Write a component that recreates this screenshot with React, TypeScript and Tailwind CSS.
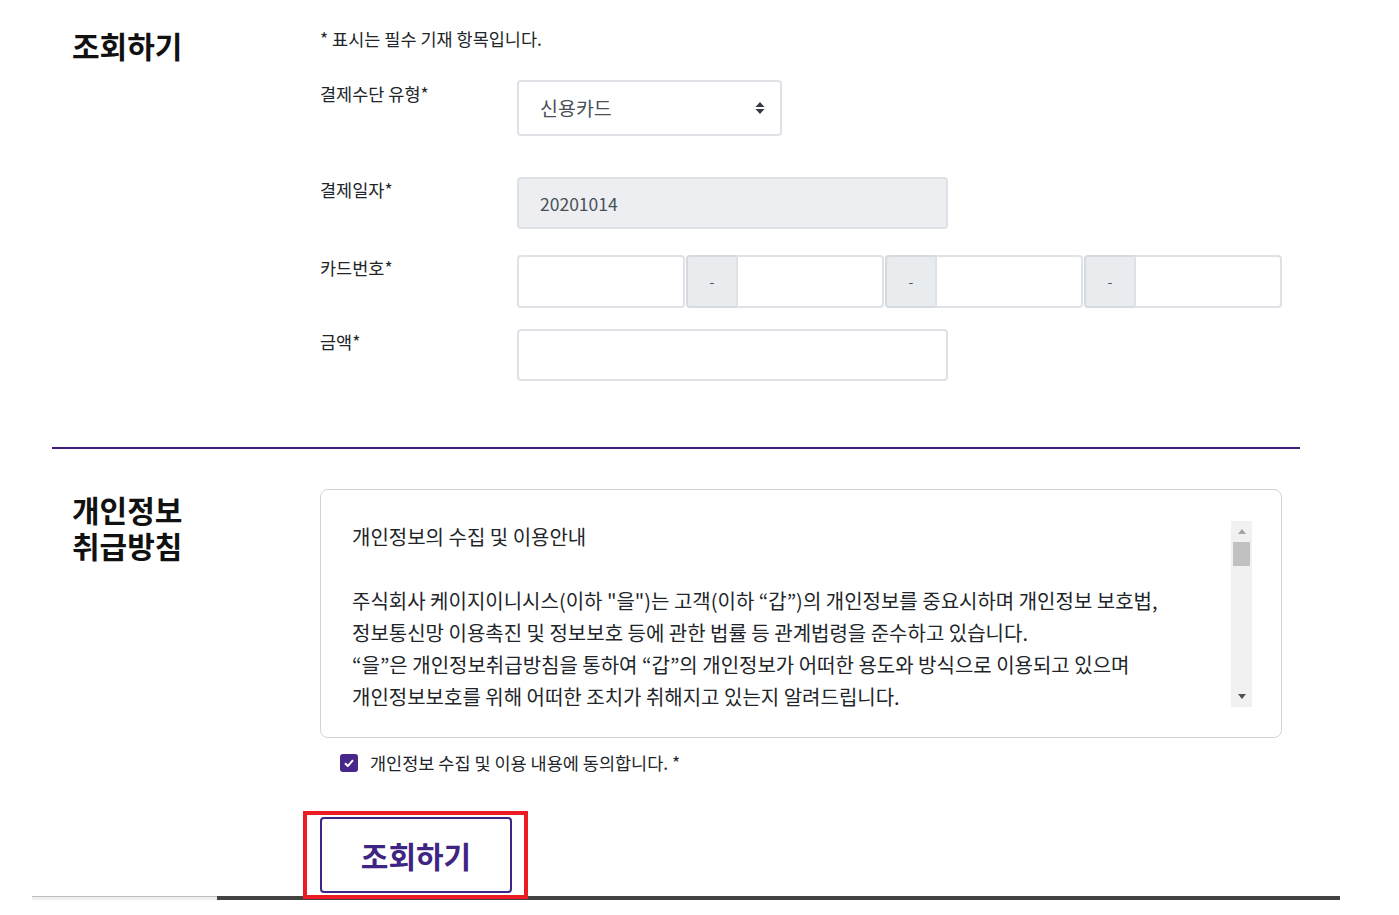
import { useState } from "react";

const policyLines = [
  "주식회사 케이지이니시스(이하 \"을\")는 고객(이하 “갑”)의 개인정보를 중요시하며 개인정보 보호법,",
  "정보통신망 이용촉진 및 정보보호 등에 관한 법률 등 관계법령을 준수하고 있습니다.",
  "“을”은 개인정보취급방침을 통하여 “갑”의 개인정보가 어떠한 용도와 방식으로 이용되고 있으며",
  "개인정보보호를 위해 어떠한 조치가 취해지고 있는지 알려드립니다.",
  "",
  "1. 수집하는 개인정보 항목",
  "“을”은 결제내역 조회를 위해 아래와 같은 개인정보를 수집하고 있습니다.",
];

export default function App() {
  const [agree, setAgree] = useState(true);
  const [payType, setPayType] = useState("card");

  return (
    <div className="min-h-[915px] w-[1399px] bg-white font-['Noto_Sans_CJK_KR',sans-serif] text-[#212529]">
      <div className="ml-[52px] w-[1248px]">
        {/* 조회 조건 */}
        <div className="flex pt-[27px]">
          <div className="w-[268px] pl-[20px]">
            <h2 className="text-[30px] font-bold leading-[36px] text-[#111]">조회하기</h2>
          </div>
          <div className="flex-1">
            <p className="text-[17.5px] leading-[24px]">* 표시는 필수 기재 항목입니다.</p>

            <div className="mt-[29px] flex items-start">
              <label className="w-[197px] pt-[2px] text-[17.5px] leading-[24px]">결제수단 유형*</label>
              <div className="relative h-[56px] w-[265px]">
                <select
                  value={payType}
                  onChange={(e) => setPayType(e.target.value)}
                  className="h-full w-full appearance-none rounded-[4px] border-2 border-[#dee2e6] bg-white pl-[21px] text-[19.5px] text-[#495057] outline-none"
                >
                  <option value="card">신용카드</option>
                  <option value="bank">계좌이체</option>
                  <option value="phone">휴대폰</option>
                </select>
                <svg
                  className="pointer-events-none absolute right-[17px] top-[21px]"
                  width="10"
                  height="14"
                  viewBox="0 0 10 14"
                >
                  <path d="M5 1 L9.5 6 H0.5 Z" fill="#343a40" />
                  <path d="M5 13 L9.5 8 H0.5 Z" fill="#343a40" />
                </svg>
              </div>
            </div>

            <div className="mt-[41px] flex items-start">
              <label className="w-[197px] pt-[1px] text-[17.5px] leading-[24px]">결제일자*</label>
              <input
                readOnly
                value="20201014"
                className="h-[52px] w-[431px] rounded-[4px] border-2 border-[#dee2e6] bg-[#eceef1] px-[21px] text-[17.5px] text-[#495057] outline-none"
              />
            </div>

            <div className="mt-[26px] flex items-start">
              <label className="w-[197px] pt-[1px] text-[17.5px] leading-[24px]">카드번호*</label>
              <div className="flex h-[53px] w-[765px] gap-[1px]">
                <input className="h-full w-[168px] rounded-[4px] border-2 border-[#dee2e6] bg-white px-[12px] text-[17px] outline-none" />
                {[0, 1, 2].map((i) => (
                  <div key={i} className="flex h-full">
                    <span className="flex w-[50px] items-center justify-center rounded-l-[4px] border-2 border-r-0 border-[#d6dadf] bg-[#e9ecef] text-[14px] text-[#495057]">
                      -
                    </span>
                    <input className="h-full w-[148px] rounded-r-[4px] border-2 border-[#dee2e6] bg-white px-[12px] text-[17px] outline-none" />
                  </div>
                ))}
              </div>
            </div>

            <div className="mt-[21px] flex items-start">
              <label className="w-[197px] pt-[1px] text-[17.5px] leading-[24px]">금액*</label>
              <input className="h-[52px] w-[431px] rounded-[4px] border-2 border-[#dee2e6] bg-white px-[21px] text-[17px] outline-none" />
            </div>
          </div>
        </div>

        <div className="mt-[66px] h-[2px] w-full bg-[#3f1d7a]" />

        {/* 개인정보 취급방침 */}
        <div className="mt-[40px] flex">
          <div className="w-[268px] pl-[20px] pt-[2px]">
            <h2 className="text-[30px] font-bold leading-[36px] text-[#111]">
              개인정보
              <br />
              취급방침
            </h2>
          </div>
          <div className="flex-1">
            <div className="h-[249px] w-[962px] rounded-[8px] border border-[#d4d4d4] pb-[30px] pl-[31px] pr-[29px] pt-[31px]">
              <div className="flex h-[186px]">
                <div className="flex-1 overflow-hidden text-[20px] leading-[32px]">
                  <p>개인정보의 수집 및 이용안내</p>
                  <p>&nbsp;</p>
                  {policyLines.map((line, i) => (
                    <p key={i} className="whitespace-nowrap">{line || "\u00a0"}</p>
                  ))}
                </div>
                {/* 스크롤바 */}
                <div className="flex w-[21px] flex-col items-center bg-[#f1f1f1]">
                  <div className="flex h-[21px] w-full items-center justify-center">
                    <svg width="8" height="5" viewBox="0 0 8 5">
                      <path d="M4 0 L8 5 H0 Z" fill="#a3a3a3" />
                    </svg>
                  </div>
                  <div className="h-[24px] w-[17px] bg-[#c1c1c1]" />
                  <div className="flex-1" />
                  <div className="flex h-[21px] w-full items-center justify-center">
                    <svg width="8" height="5" viewBox="0 0 8 5">
                      <path d="M0 0 H8 L4 5 Z" fill="#505050" />
                    </svg>
                  </div>
                </div>
              </div>
            </div>

            <label className="ml-[20px] mt-[13px] flex cursor-pointer items-center gap-[12px]">
              <span
                onClick={() => setAgree(!agree)}
                className={
                  agree
                    ? "flex h-[18px] w-[18px] items-center justify-center rounded-[3px] bg-[#48278a]"
                    : "flex h-[18px] w-[18px] items-center justify-center rounded-[3px] border border-[#adb5bd] bg-white"
                }
              >
                {agree && (
                  <svg width="10" height="8" viewBox="0 0 10 8">
                    <path d="M1 4.2 L3.8 7 L9 1.2" fill="none" stroke="#fff" strokeWidth="2" />
                  </svg>
                )}
              </span>
              <span className="text-[17.5px] leading-[24px]">개인정보 수집 및 이용 내용에 동의합니다. *</span>
            </label>

            <div className="relative mt-[42px] w-[192px]">
              <button
                type="button"
                className="h-[76px] w-[192px] rounded-[4px] border-2 border-[#3f2583] bg-white text-[30px] font-bold text-[#3f2583]"
              >
                조회하기
              </button>
              <div className="pointer-events-none absolute -bottom-[6px] -left-[17px] -right-[16px] -top-[6px] border-[4px] border-[#ec1c24]" />
            </div>
          </div>
        </div>
      </div>

      <div className="ml-[32px] mt-[3px] flex h-[4px] w-[1308px]">
        <div className="w-[185px] border-t border-[#bdbdbd] bg-[#f0f0f0]" />
        <div className="flex-1 bg-[#424242]" />
      </div>
    </div>
  );
}
